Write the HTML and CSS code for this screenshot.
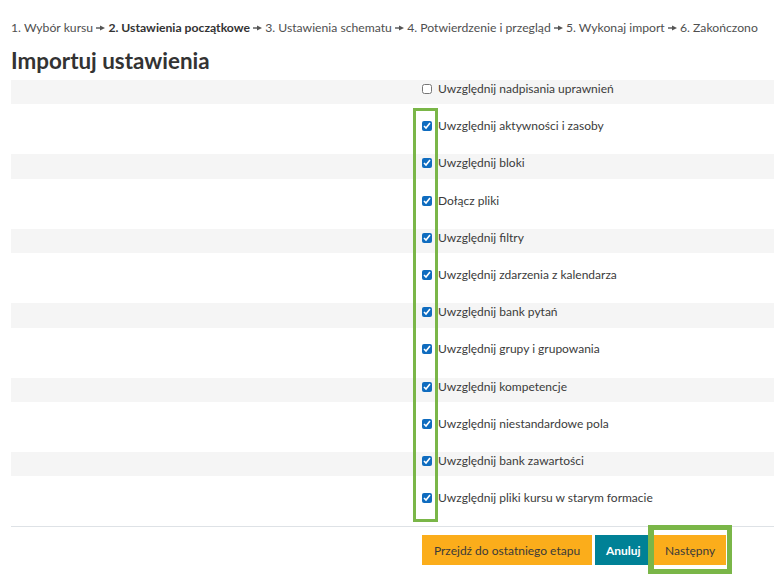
FILE: index.html
```html
<!DOCTYPE html>
<html lang="pl">
<head>
  <meta charset="UTF-8">
  <title>Importuj ustawienia</title>
  <link rel="stylesheet" href="styles.css">
</head>
<body>
<div class="page">
  <div class="stages">
    <span>1. Wybór kursu</span> <svg class="sep" width="9" height="6" viewBox="0 0 9 6"><rect x="0" y="2.3" width="5" height="1.4"/><path d="M4 0.5 L9 3 L4 5.5 Z"/></svg>
    <span class="current">2. Ustawienia początkowe</span> <svg class="sep" width="9" height="6" viewBox="0 0 9 6"><rect x="0" y="2.3" width="5" height="1.4"/><path d="M4 0.5 L9 3 L4 5.5 Z"/></svg>
    <span>3. Ustawienia schematu</span> <svg class="sep" width="9" height="6" viewBox="0 0 9 6"><rect x="0" y="2.3" width="5" height="1.4"/><path d="M4 0.5 L9 3 L4 5.5 Z"/></svg>
    <span>4. Potwierdzenie i przegląd</span> <svg class="sep" width="9" height="6" viewBox="0 0 9 6"><rect x="0" y="2.3" width="5" height="1.4"/><path d="M4 0.5 L9 3 L4 5.5 Z"/></svg>
    <span>5. Wykonaj import</span> <svg class="sep" width="9" height="6" viewBox="0 0 9 6"><rect x="0" y="2.3" width="5" height="1.4"/><path d="M4 0.5 L9 3 L4 5.5 Z"/></svg>
    <span>6. Zakończono</span>
  </div>

  <h2>Importuj ustawienia</h2>

  <form class="settings">
    <div class="row"><div class="lbl"></div><label><input type="checkbox"> Uwzględnij nadpisania uprawnień</label></div>
    <div class="row"><div class="lbl"></div><label><input type="checkbox" checked>Uwzględnij aktywności i zasoby</label></div>
    <div class="row"><div class="lbl"></div><label><input type="checkbox" checked>Uwzględnij bloki</label></div>
    <div class="row"><div class="lbl"></div><label><input type="checkbox" checked>Dołącz pliki</label></div>
    <div class="row"><div class="lbl"></div><label><input type="checkbox" checked>Uwzględnij filtry</label></div>
    <div class="row"><div class="lbl"></div><label><input type="checkbox" checked>Uwzględnij zdarzenia z kalendarza</label></div>
    <div class="row"><div class="lbl"></div><label><input type="checkbox" checked>Uwzględnij bank pytań</label></div>
    <div class="row"><div class="lbl"></div><label><input type="checkbox" checked>Uwzględnij grupy i grupowania</label></div>
    <div class="row"><div class="lbl"></div><label><input type="checkbox" checked>Uwzględnij kompetencje</label></div>
    <div class="row"><div class="lbl"></div><label><input type="checkbox" checked>Uwzględnij niestandardowe pola</label></div>
    <div class="row"><div class="lbl"></div><label><input type="checkbox" checked>Uwzględnij bank zawartości</label></div>
    <div class="row"><div class="lbl"></div><label><input type="checkbox" checked>Uwzględnij pliki kursu w starym formacie</label></div>

    <div class="buttons">
      <button type="button" class="btn btn-orange btn-wide">Przejdź do ostatniego etapu</button>
      <button type="button" class="btn btn-teal">Anuluj</button>
      <span class="mark-btn"><button type="button" class="btn btn-orange">Następny</button></span>
    </div>
  </form>

  <div class="mark-checks"></div>
</div>
</body>
</html>
```

FILE: styles.css
```css
body {
  margin: 0;
  background: #fff;
  font-family: 'Lato', 'Liberation Sans', sans-serif;
  font-size: 12px;
  color: #3b3b3b;
}
.page {
  position: relative;
  padding: 20px 0 0 11px;
}
.stages {
  height: 16px;
  line-height: 16px;
  font-size: 12.2px;
  color: #4f4f4f;
  white-space: nowrap;
}
.stages .current {
  font-weight: bold;
  color: #333;
}
.stages .sep {
  fill: #555;
  vertical-align: 1px;
}
h2 {
  margin: 13px 0 7px;
  font-size: 22.4px;
  line-height: 24px;
  font-weight: bold;
  color: #333;
}
.row {
  display: flex;
  align-items: flex-start;
  height: 24.4px;
  margin-bottom: 12.8px;
}
.row:nth-child(odd) {
  background: #f5f5f5;
}
.lbl {
  width: 411px;
  flex-shrink: 0;
}
.row label {
  display: flex;
  align-items: center;
  margin-top: 2px;
  line-height: 14px;
}
.row input {
  width: 10px;
  height: 10px;
  margin: 0 6px 0 0;
  accent-color: #0f6cbf;
}
.buttons {
  border-top: 1px solid #dee2e6;
  padding: 8px 0 0 411px;
  display: flex;
  align-items: flex-start;
}
.btn {
  height: 30px;
  border: none;
  padding: 0 11px;
  font-family: inherit;
  font-size: 12px;
  cursor: pointer;
}
.btn-orange {
  background: #fbad1b;
  color: #3a3a3a;
}
.btn-wide {
  width: 170px;
}
.btn-teal {
  background: #008196;
  color: #fff;
  font-weight: bold;
  width: 53px;
  margin-left: 3px;
}
.mark-btn {
  margin: -10px 0 0 0;
  padding: 5px 1px 4px 0;
  border: 5px solid #7ab648;
  border-left-width: 6px;
  display: inline-flex;
}
.mark-btn .btn {
  width: 72px;
}
.mark-checks {
  position: absolute;
  left: 413px;
  top: 108px;
  width: 19px;
  height: 408px;
  border: 3px solid #7ab648;
}
```
